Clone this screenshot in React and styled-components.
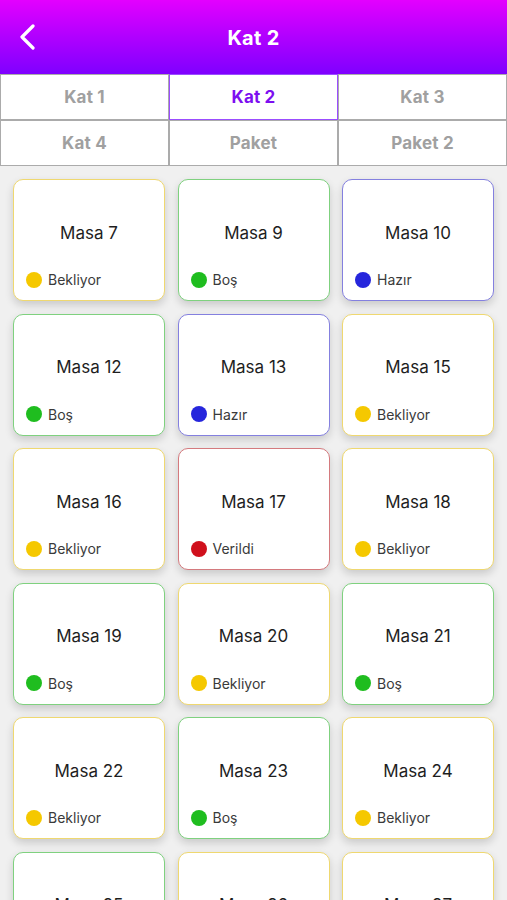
import styled, { createGlobalStyle } from "styled-components";

const GlobalStyle = createGlobalStyle`
  html, body {
    margin: 0;
    padding: 0;
    background: #f0f0f0;
    font-family: Inter, "Noto Sans", "DejaVu Sans", sans-serif;
  }
`;

const Screen = styled.div`
  width: 507px;
  height: 900px;
  overflow: hidden;
  background: #f0f0f0;
`;

const Header = styled.div`
  height: 74px;
  background: linear-gradient(180deg, #e300ff 0%, #b000ff 50%, #7f00ff 100%);
  display: flex;
  align-items: center;
  justify-content: center;
  position: relative;
`;

const BackButton = styled.div`
  position: absolute;
  left: 18px;
  top: 24px;
  width: 20px;
  height: 26px;
  display: flex;
`;

const Title = styled.h1`
  margin: 2px 0 0;
  color: #fff;
  font-size: 20px;
  font-weight: 700;
  letter-spacing: 0.3px;
`;

const Tabs = styled.div`
  display: grid;
  grid-template-columns: repeat(3, 1fr);
  background: #fff;
`;

const Tab = styled.div`
  height: 44px;
  border: 1px solid ${(p) => (p.$active ? "#9b4dff" : "#ababab")};
  display: flex;
  align-items: center;
  justify-content: center;
  font-size: 17px;
  font-weight: 700;
  letter-spacing: 0.2px;
  color: ${(p) => (p.$active ? "#7d0ff0" : "#a0a0a0")};
`;

const Grid = styled.div`
  display: grid;
  grid-template-columns: repeat(3, 152px);
  column-gap: 12.5px;
  row-gap: 12.5px;
  padding: 13px 13px;
`;

const Card = styled.div`
  height: 120px;
  width: 150px;
  background: #fff;
  border: 1px solid ${(p) => p.$border};
  border-radius: 10px;
  box-shadow: 0 4px 9px rgba(0, 0, 0, 0.16);
  display: flex;
  flex-direction: column;
`;

const CardName = styled.div`
  flex: 1;
  display: flex;
  align-items: center;
  justify-content: center;
  padding-top: 14px;
  font-size: 17px;
  color: #1e1e1e;
`;

const Status = styled.div`
  display: flex;
  align-items: center;
  gap: 6px;
  padding: 0 0 12px 12px;
  font-size: 14px;
  color: #3a3a3a;
`;

const Dot = styled.span`
  width: 16px;
  height: 16px;
  border-radius: 50%;
  background: ${(p) => p.$color};
`;

const STATES = {
  bekliyor: { label: "Bekliyor", dot: "#f5c800", border: "#efd870" },
  bos: { label: "Boş", dot: "#1fbd1f", border: "#7fd17f" },
  hazir: { label: "Hazır", dot: "#2626dc", border: "#8480df" },
  verildi: { label: "Verildi", dot: "#d0101c", border: "#d47a7e" },
};

const tables = [
  [7, "bekliyor"], [9, "bos"], [10, "hazir"],
  [12, "bos"], [13, "hazir"], [15, "bekliyor"],
  [16, "bekliyor"], [17, "verildi"], [18, "bekliyor"],
  [19, "bos"], [20, "bekliyor"], [21, "bos"],
  [22, "bekliyor"], [23, "bos"], [24, "bekliyor"],
  [25, "bos"], [26, "bekliyor"], [27, "bekliyor"],
];

const tabs = ["Kat 1", "Kat 2", "Kat 3", "Kat 4", "Paket", "Paket 2"];

export default function App() {
  return (
    <Screen>
      <GlobalStyle />
      <Header>
        <BackButton>
          <svg width="20" height="26" viewBox="0 0 20 26" fill="none">
            <path d="M15 2 L4 13 L15 24" stroke="#fff" strokeWidth="3.2" strokeLinecap="round" strokeLinejoin="round" />
          </svg>
        </BackButton>
        <Title>Kat 2</Title>
      </Header>
      <Tabs>
        {tabs.map((t) => (
          <Tab key={t} $active={t === "Kat 2"}>{t}</Tab>
        ))}
      </Tabs>
      <Grid>
        {tables.map(([n, s]) => {
          const st = STATES[s];
          return (
            <Card key={n} $border={st.border}>
              <CardName>Masa {n}</CardName>
              <Status>
                <Dot $color={st.dot} />
                {st.label}
              </Status>
            </Card>
          );
        })}
      </Grid>
    </Screen>
  );
}
